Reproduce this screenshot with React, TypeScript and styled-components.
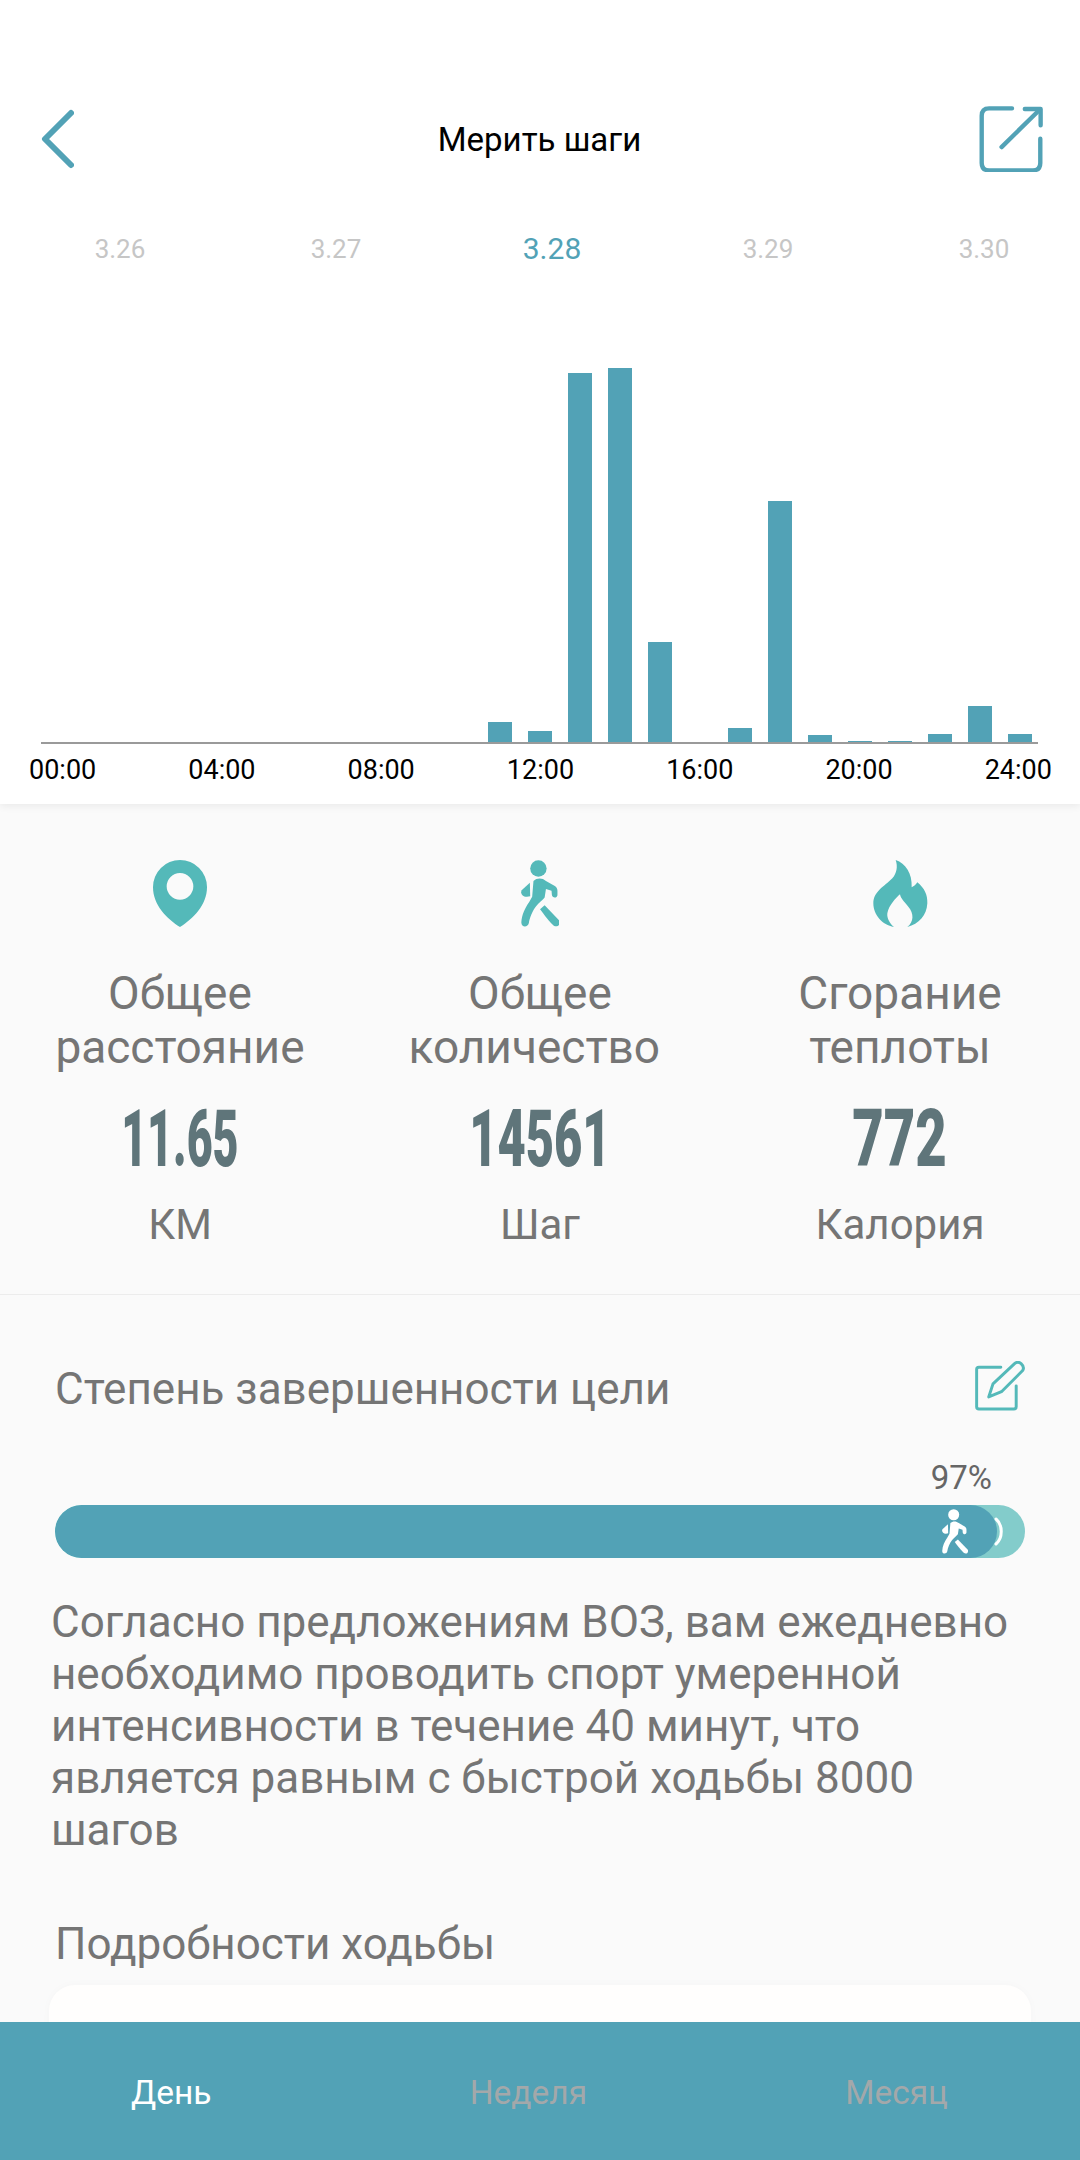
import React from "react";
import styled, { createGlobalStyle } from "styled-components";

const Global = createGlobalStyle`
  html, body { margin: 0; padding: 0; background: #fafafa; }
  * { box-sizing: border-box; }
  body { font-family: Roboto, "Liberation Sans", sans-serif; }
`;

const Page = styled.div`
  width: 1080px;
  height: 2160px;
  display: flex;
  flex-direction: column;
  overflow: hidden;
  background: #fafafa;
`;
const Scroll = styled.main`
  flex: 1;
  min-height: 0;
  overflow: hidden;
`;
const TopPanel = styled.section`
  background: #fff;
  height: 804px;
  box-shadow: 0 2px 8px rgba(0, 0, 0, 0.07);
  position: relative;
`;
const Header = styled.header`
  display: grid;
  grid-template-columns: 1fr auto 1fr;
  align-items: center;
  padding: 106px 37px 0 40px;
`;
const NavRight = styled.div`
  display: flex;
  justify-content: flex-end;
`;
const Title = styled.h1`
  margin: 0 4px 0 0;
  font-size: 33px;
  line-height: 65px;
  font-weight: 400;
  color: #000;
`;
const Dates = styled.div`
  display: grid;
  grid-template-columns: repeat(5, 216px);
  padding: 62px 12px 0;
`;
const DateLabel = styled.span<{ $active?: boolean }>`
  text-align: center;
  font-size: ${(p) => (p.$active ? 30 : 26)}px;
  line-height: 30px;
  color: ${(p) => (p.$active ? "#52a2b6" : "#c6c6c6")};
`;
const Bars = styled.div`
  margin: 0 42px 0 41px;
  height: 480px;
  display: flex;
  align-items: flex-end;
  justify-content: space-between;
  padding: 0 6px 0 7px;
  border-bottom: 2px solid #9a9a9a;
`;
const Bar = styled.div`
  width: 24px;
  background: #52a2b6;
`;
const Times = styled.div`
  display: flex;
  justify-content: space-between;
  padding: 10px 28px 0 29px;
`;
const Time = styled.span`
  font-size: 27px;
  line-height: 32px;
  color: #000;
`;
const Stats = styled.section`
  display: grid;
  grid-template-columns: repeat(3, 1fr);
  padding: 56px 0 42px;
  border-bottom: 1px solid #ececec;
`;
const Stat = styled.div`
  display: flex;
  flex-direction: column;
  align-items: center;
  text-align: center;
`;
const StatLabel = styled.div`
  margin-top: 39px;
  font-size: 46px;
  line-height: 54px;
  color: #757575;
`;
const StatValue = styled.div<{ $squeeze: number }>`
  margin-top: 25px;
  font-size: 80px;
  line-height: 80px;
  font-weight: 900;
  color: #5f757a;
  transform: scaleX(${(p) => p.$squeeze});
`;
const StatUnit = styled.div`
  margin-top: 19px;
  font-size: 42px;
  line-height: 54px;
  color: #757575;
`;
const Goal = styled.section`
  padding: 66px 55px 0;
`;
const GoalHead = styled.div`
  display: flex;
  justify-content: space-between;
  align-items: center;
  height: 51px;
`;
const SectionTitle = styled.h2`
  margin: 0;
  font-size: 44px;
  line-height: 52px;
  font-weight: 400;
  color: #757575;
`;
const GoalTitle = styled(SectionTitle)`
  padding-top: 4px;
`;
const GoalEdit = styled.svg`
  margin-right: -1px;
`;
const Percent = styled.div`
  margin-top: 50px;
  padding-right: 33px;
  text-align: right;
  font-size: 33px;
  line-height: 32px;
  color: #666;
`;
const Track = styled.div`
  position: relative;
  margin-top: 11px;
  height: 53px;
  border-radius: 27px;
  background: #83cccb;
  overflow: hidden;
`;
const Fill = styled.div`
  position: relative;
  height: 100%;
  border-radius: 27px;
  background: #52a2b6;
`;
const TrackRing = styled.svg`
  position: absolute;
  left: 933px;
  top: 12px;
  width: 20px;
  height: 29px;
`;
const TrackWalker = styled.div`
  position: absolute;
  left: 887px;
  top: 4px;
  display: flex;
`;
const Advice = styled.p`
  margin: 38px 0 0;
  padding: 0 40px 0 51px;
  font-size: 44px;
  line-height: 52px;
  color: #757575;
`;
const Details = styled.section`
  padding: 62px 49px 0;
`;
const DetailsTitle = styled(SectionTitle)`
  padding-left: 6px;
`;
const Card = styled.div`
  margin-top: 15px;
  height: 300px;
  border-radius: 26px;
  background: #fffefd;
  box-shadow: 0 0 10px rgba(0, 0, 0, 0.025);
`;
const Tabs = styled.nav`
  flex: none;
  height: 138px;
  background: #52a2b6;
  display: flex;
  justify-content: space-between;
  align-items: center;
  padding: 2px 132px 0 131px;
`;
const Tab = styled.span<{ $active?: boolean }>`
  font-size: 33.5px;
  color: ${(p) => (p.$active ? "#fff" : "#a3a8aa")};
`;

const Walker = ({ color, h }: { color: string; h: number }) => (
  <svg viewBox="180 58 118 204" height={h} width={(h * 118) / 204} fill={color}>
    <circle cx="233" cy="84" r="25" />
    <path d="M218 122 C228 112 245 112 256 122 L283 137 C289 141 291 146 291 152 L291 165 C289 176 275 174 274 164 L273 152 L256 146 L252 172 C246 180 234 188 226 199 C215 213 206 235 204 250 C201 264 181 264 181 248 C182 226 192 204 205 186 L214 170 Z" />
    <path d="M207 127 L208 168 L198 170 C186 171 177 160 182 150 Z" />
    <path d="M252 196 L297 243 C302 256 290 264 280 258 C268 248 250 224 238 208 Z" />
  </svg>
);

const Pin = () => (
  <svg viewBox="68 29 162 201" width="54" height="67" fill="#54b9b9" fillRule="evenodd">
    <path d="M149 230 C110 205 68 165 68 110 A81 81 0 0 1 230 110 C230 165 188 205 149 230Z M149 68 A40 40 0 1 0 149 148 A40 40 0 1 0 149 68Z" />
  </svg>
);
const Flame = () => (
  <svg viewBox="68 30 163 201" width="55" height="67" fill="#54b9b9">
    <path d="M135 30 C165 40 185 70 183 112 C190 108 196 104 200 97 C222 115 231 135 230 160 C228 197 205 222 170 231 C190 215 190 190 173 170 C160 155 150 145 148 133 C135 145 115 165 110 190 C108 205 118 222 130 231 C95 225 68 195 68 160 C68 125 100 110 125 85 C138 70 142 50 135 30Z" />
  </svg>
);

const hours = [0, 0, 0, 0, 0, 0, 0, 0, 0, 0, 0, 20, 11, 369, 374, 100, 0, 14, 241, 7, 1, 1, 8, 36, 8];
const times = ["00:00", "04:00", "08:00", "12:00", "16:00", "20:00", "24:00"];

export default function App() {
  return (
    <Page>
      <Global />
      <Scroll>
        <TopPanel>
          <Header>
            <svg width="34" height="60" viewBox="0 0 34 60" fill="none" stroke="#52a2b6" strokeWidth="6" strokeLinecap="round" strokeLinejoin="round">
              <path d="M31 4 L5 30 L31 56" />
            </svg>
            <Title>Мерить шаги</Title>
            <NavRight>
              <svg width="64" height="66" viewBox="60 45 190 196" fill="none" stroke="#52a2b6" strokeWidth="13" strokeLinecap="round" strokeLinejoin="round">
                <path d="M158 52 H90 Q68 52 68 74 V214 Q68 236 90 236 H220 Q242 236 242 214 V142" />
                <path d="M127 167 L240 56" />
                <path d="M196 54 H243 V102" />
              </svg>
            </NavRight>
          </Header>
          <Dates>
            <DateLabel>3.26</DateLabel>
            <DateLabel>3.27</DateLabel>
            <DateLabel $active>3.28</DateLabel>
            <DateLabel>3.29</DateLabel>
            <DateLabel>3.30</DateLabel>
          </Dates>
          <Bars>
            {hours.map((h, i) => (
              <Bar key={i} style={{ height: h }} />
            ))}
          </Bars>
          <Times>
            {times.map((t) => (
              <Time key={t}>{t}</Time>
            ))}
          </Times>
        </TopPanel>
        <Stats>
          <Stat>
            <Pin />
            <StatLabel>Общее<br />расстояние</StatLabel>
            <StatValue $squeeze={0.56}>11.65</StatValue>
            <StatUnit>КМ</StatUnit>
          </Stat>
          <Stat>
            <Walker color="#54b9b9" h={67} />
            <StatLabel>Общее<br />количество{"\u00a0"}</StatLabel>
            <StatValue $squeeze={0.61}>14561</StatValue>
            <StatUnit>Шаг</StatUnit>
          </Stat>
          <Stat>
            <Flame />
            <StatLabel>Сгорание<br />теплоты</StatLabel>
            <StatValue $squeeze={0.68}>772</StatValue>
            <StatUnit>Калория</StatUnit>
          </Stat>
        </Stats>
        <Goal>
          <GoalHead>
            <GoalTitle>Степень завершенности цели</GoalTitle>
            <GoalEdit width="51" height="51" viewBox="283 62 156 156" fill="none" stroke="#54b9b9" strokeWidth="9" strokeLinejoin="round" strokeLinecap="round">
              <path d="M362 81 H295 Q288 81 288 88 V202 Q288 209 295 209 H402 Q409 209 409 202 V138" />
              <path d="M325 172 L338 132 L404 70 Q414 62 424 70 Q436 81 428 92 L364 156 Z" />
            </GoalEdit>
          </GoalHead>
          <Percent>97%</Percent>
          <Track>
            <TrackRing viewBox="0 0 20 29" fill="none" stroke="#fff" strokeWidth="3" strokeLinecap="round">
              <path d="M8 2 C15 8 15 21 8 27" />
            </TrackRing>
            <Fill style={{ width: `${(942 / 970) * 100}%` }} />
            <TrackWalker>
              <Walker color="#fff" h={45} />
            </TrackWalker>
          </Track>
        </Goal>
        <Advice>
          Согласно предложениям ВОЗ, вам ежедневно необходимо проводить спорт умеренной интенсивности в течение 40 минут, что является равным с быстрой ходьбы 8000 шагов
        </Advice>
        <Details>
          <DetailsTitle>Подробности ходьбы</DetailsTitle>
          <Card />
        </Details>
      </Scroll>
      <Tabs>
        <Tab $active>День</Tab>
        <Tab>Неделя</Tab>
        <Tab>Месяц</Tab>
      </Tabs>
    </Page>
  );
}
